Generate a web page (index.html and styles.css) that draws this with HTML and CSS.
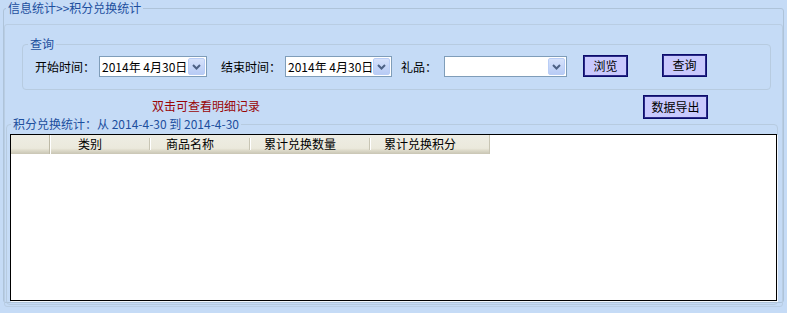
FILE: index.html
```html
<!DOCTYPE html>
<html lang="zh-CN">
<head>
<meta charset="utf-8">
<title>积分兑换统计</title>
<link rel="stylesheet" href="styles.css">
</head>
<body>
<fieldset class="outer">
  <legend class="title">信息统计&gt;&gt;积分兑换统计</legend>
  <div class="panel">
    <fieldset class="query">
      <legend class="qlegend">查询</legend>
      <div class="qrow">
        <span class="lbl">开始时间：</span>
        <div class="combo date d1">
          <span class="val">2014年 4月30日</span>
          <span class="dd"><svg width="15" height="15" viewBox="0 0 15 15"><path d="M4 6 L7.5 9.5 L11 6" fill="none" stroke="#4d6185" stroke-width="2"/></svg></span>
        </div>
        <span class="lbl l2">结束时间：</span>
        <div class="combo date d2">
          <span class="val">2014年 4月30日</span>
          <span class="dd"><svg width="15" height="15" viewBox="0 0 15 15"><path d="M4 6 L7.5 9.5 L11 6" fill="none" stroke="#4d6185" stroke-width="2"/></svg></span>
        </div>
        <span class="lbl l3">礼品：</span>
        <div class="combo gift">
          <span class="val"></span>
          <span class="dd"><svg width="15" height="15" viewBox="0 0 15 15"><path d="M4 6 L7.5 9.5 L11 6" fill="none" stroke="#4d6185" stroke-width="2"/></svg></span>
        </div>
        <button class="btn browse">浏览</button>
        <button class="btn search">查询</button>
      </div>
    </fieldset>
    <div class="row2">
      <span class="hint">双击可查看明细记录</span>
      <button class="btn export">数据导出</button>
    </div>
    <fieldset class="result">
      <legend class="rlegend">积分兑换统计：从 2014-4-30 到 2014-4-30</legend>
      <div class="grid">
        <div class="ghead">
          <div class="hc c0"></div>
          <div class="hc c1">类别</div>
          <div class="hc c2">商品名称</div>
          <div class="hc c3">累计兑换数量</div>
          <div class="hc c4">累计兑换积分</div>
        </div>
      </div>
    </fieldset>
  </div>
</fieldset>
</body>
</html>
```
FILE: styles.css
```css
html, body {
  margin: 0;
  padding: 0;
  background: #c5dbf6;
  font-family: "Noto Sans CJK SC", "Noto Sans", sans-serif;
  font-size: 12px;
  color: #000;
  width: 787px;
  height: 313px;
  overflow: hidden;
}

fieldset {
  margin: 0;
  padding: 0;
  min-inline-size: 0;
}

legend {
  line-height: 16px;
  padding: 0 2px;
  color: #1d4f9e;
}

.outer {
  margin: 0 3px 0 3px;
  border: 1px solid #aec3d9;
  border-radius: 3px;
  height: 301px;
  box-sizing: content-box;
}

.title {
  margin-left: 2px;
}

.panel {
  margin-top: 8px;
  border: 1px solid #b9cde3;
  border-radius: 3px;
  height: 281px;
}

.query {
  margin: 11px 11px 0 17px;
  border: 1px solid #b7cbe0;
  border-radius: 4px;
  padding: 3px 0 12px 0;
}

.qlegend {
  margin-left: 5px;
}

.qrow {
  display: flex;
  align-items: center;
  height: 22px;
  padding-left: 12px;
}

.lbl {
  line-height: 21px;
  white-space: nowrap;
}

.l2 { margin-left: 14px; }
.l3 { margin-left: 9px; }

.combo {
  display: flex;
  align-items: center;
  height: 21px;
  box-sizing: border-box;
  border: 1px solid #7f9db9;
  background: #fff;
  margin-left: 4px;
}

.date { width: 108px; }
.d2 { width: 107px; }
.gift { width: 123px; margin-left: 7px; }

.val {
  flex: 1;
  padding-left: 2px;
  white-space: nowrap;
  line-height: 19px;
}

.dd {
  width: 17px;
  height: 17px;
  margin-right: 1px;
  box-sizing: border-box;
  border: 1px solid #b9cdf6;
  border-radius: 2px;
  background: linear-gradient(#d6e2fb, #b8cbf5);
  display: flex;
  align-items: center;
  justify-content: center;
  flex: none;
}

.btn {
  font-family: "Noto Sans CJK SC", "Noto Sans", sans-serif;
  font-size: 12px;
  color: #000;
  background: #c9c9fd;
  border: 1px solid #0c0c6c;
  box-shadow: inset 0 0 0 1px #2a2a88;
  padding: 0;
  line-height: 16px;
  cursor: pointer;
}

.browse {
  width: 45px;
  height: 22px;
  margin-left: 16px;
}

.search {
  width: 45px;
  height: 23px;
  margin-left: 34px;
  margin-top: -2px;
}

.row2 {
  display: flex;
  align-items: flex-start;
  height: 21px;
  margin-top: 5px;
  padding-left: 147px;
}

.hint {
  color: #9a0606;
  line-height: 16px;
  margin-top: 3px;
  white-space: nowrap;
}

.export {
  width: 65px;
  height: 24px;
  margin-left: 383px;
  flex: none;
}

.result {
  margin: 0 4px 0 1px;
  border: 1px solid #b7cbe0;
  border-radius: 4px;
  padding: 2px 0 3px 3px;
}

.rlegend {
  margin-left: 1px;
}

.grid {
  height: 167px;
  box-sizing: border-box;
  border: 1px solid #000;
  background: #fff;
  box-shadow: 1px 1px 0 #f4f8fc;
}

.ghead {
  display: flex;
  width: 479px;
  height: 19px;
  background: linear-gradient(#eeede4 0, #ebe9dc 70%, #dedbcb 80%, #d3d0bf 90%, #c9c5b4 100%);
}

.hc {
  position: relative;
  box-sizing: border-box;
  text-align: center;
  line-height: 17px;
  padding-right: 20px;
  white-space: nowrap;
}

.hc::after {
  content: "";
  position: absolute;
  right: 0;
  top: 3px;
  bottom: 4px;
  width: 1px;
  background: #c8c5b4;
  box-shadow: 1px 0 0 #fff;
}

.c0 { width: 39px; }
.c0::after { top: 0; bottom: 0; background: #bdb9a6; }
.c1 { width: 100px; }
.c2 { width: 100px; }
.c3 { width: 120px; }
.c4 { width: 120px; }
.c4::after { right: 0; top: 0; bottom: 0; }
```
